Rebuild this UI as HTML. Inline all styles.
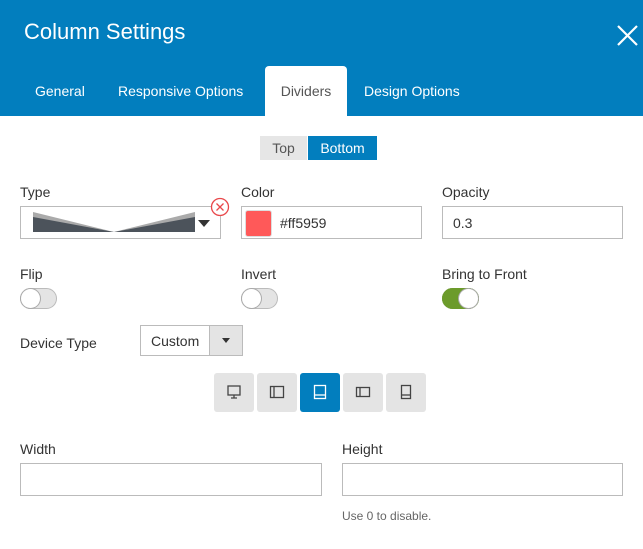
<!DOCTYPE html>
<html><head><meta charset="utf-8"><style>
*{box-sizing:border-box;margin:0;padding:0}
body{width:643px;height:549px;background:#fff;font-family:"Liberation Sans",sans-serif;color:#333;position:relative;overflow:hidden}
.abs{position:absolute}
.hdr{left:0;top:0;width:643px;height:116px;background:#027ebe}
.title{left:24px;top:19px;font-size:22px;color:#fff}
.tab{top:83px;font-size:14px;color:#fff}
.act{left:265px;top:66px;width:82px;height:50px;background:#fff;border-radius:4px 4px 0 0;color:#555;font-size:14px;text-align:center;padding-top:17px}
.lbl{font-size:14px;color:#333}
.inp{border:1px solid #bbb;background:#fff;height:33px}
.tog{width:37px;height:21px;border-radius:11px;border:1px solid #bbb;background:#e4e4e4}
.tog::after{content:"";position:absolute;left:0;top:0;width:19px;height:19px;border-radius:50%;background:#fff;box-shadow:0 0 0 1px #aaa}
.dev{top:373px;width:40px;height:39px;background:#e4e4e4;border-radius:3px}
.dev svg{position:absolute;left:12px;top:11px}
</style></head><body>
<div class="abs hdr"></div>
<div class="abs title">Column Settings</div>
<svg class="abs" style="left:617px;top:25px" width="21" height="21"><path d="M1 1L20 20M20 1L1 20" stroke="#fff" stroke-width="2.2"/></svg>
<div class="abs tab" style="left:35px">General</div>
<div class="abs tab" style="left:118px">Responsive Options</div>
<div class="abs act">Dividers</div>
<div class="abs tab" style="left:364px">Design Options</div>

<div class="abs" style="left:260px;top:136px;width:47px;height:24px;background:#e6e6e6;font-size:14px;color:#555;text-align:center;line-height:24px">Top</div>
<div class="abs" style="left:308px;top:136px;width:69px;height:24px;background:#027ebe;font-size:14px;color:#fff;text-align:center;line-height:24px">Bottom</div>

<div class="abs lbl" style="left:20px;top:184px">Type</div>
<div class="abs lbl" style="left:241px;top:184px">Color</div>
<div class="abs lbl" style="left:442px;top:184px">Opacity</div>

<div class="abs inp" style="left:20px;top:206px;width:201px"></div>
<svg class="abs" style="left:33px;top:212px" width="162" height="20"><polygon points="0,0 0,20 162,20 162,0 81,20" fill="#aaa"/><polygon points="0,5 0,20 162,20 162,5 81,20" fill="#4c535b"/></svg>
<svg class="abs" style="left:198px;top:220px" width="12" height="8"><polygon points="0,0 12,0 6,7" fill="#333"/></svg>
<svg class="abs" style="left:210px;top:197px" width="20" height="20"><circle cx="10" cy="10" r="8.5" fill="#fff" stroke="#e9484b" stroke-width="1.3"/><path d="M6.5 6.5L13.5 13.5M13.5 6.5L6.5 13.5" stroke="#e9484b" stroke-width="1.3"/></svg>

<div class="abs inp" style="left:241px;top:206px;width:181px"></div>
<div class="abs" style="left:245px;top:210px;width:27px;height:27px;background:#ff5959;border-radius:3px;border:1px solid #ddd"></div>
<div class="abs" style="left:280px;top:215px;font-size:14px">#ff5959</div>

<div class="abs inp" style="left:442px;top:206px;width:181px"></div>
<div class="abs" style="left:453px;top:215px;font-size:14px">0.3</div>

<div class="abs lbl" style="left:20px;top:266px">Flip</div>
<div class="abs lbl" style="left:241px;top:266px">Invert</div>
<div class="abs lbl" style="left:442px;top:266px">Bring to Front</div>
<div class="abs tog" style="left:20px;top:288px"></div>
<div class="abs tog" style="left:241px;top:288px"></div>
<div class="abs tog" style="left:442px;top:288px;background:#6c9b2b;border-color:#6c9b2b"></div>
<style>.on::after{left:16px!important}</style>
<div class="abs tog on" style="left:442px;top:288px;background:#6c9b2b;border-color:#6c9b2b"></div>

<div class="abs lbl" style="left:20px;top:335px">Device Type</div>
<div class="abs inp" style="left:140px;top:325px;width:103px;height:31px"></div>
<div class="abs" style="left:151px;top:333px;font-size:14px">Custom</div>
<div class="abs" style="left:209px;top:326px;width:33px;height:29px;background:#e4e4e4;border-left:1px solid #bbb"></div>
<svg class="abs" style="left:222px;top:338px" width="8" height="6"><polygon points="0,0 8,0 4,5" fill="#333"/></svg>

<div class="abs dev" style="left:214px"><svg width="16" height="16"><rect x="2" y="2" width="12" height="9" fill="none" stroke="#444" stroke-width="1.3"/><path d="M8 11V14M5 14H11" stroke="#444" stroke-width="1.3"/></svg></div>
<div class="abs dev" style="left:257px"><svg width="16" height="16"><rect x="1.5" y="2.5" width="13" height="11" fill="none" stroke="#444" stroke-width="1.3"/><path d="M5 3V13" stroke="#444" stroke-width="1.3"/></svg></div>
<div class="abs dev" style="left:300px;background:#027ebe"><svg width="16" height="16"><rect x="2.5" y="1.5" width="11" height="13" fill="none" stroke="#fff" stroke-width="1.3"/><path d="M3 11H13" stroke="#fff" stroke-width="1.3"/></svg></div>
<div class="abs dev" style="left:343px"><svg width="16" height="16"><rect x="1.5" y="3.5" width="13" height="9" fill="none" stroke="#444" stroke-width="1.3"/><path d="M5 4V12" stroke="#444" stroke-width="1.3"/></svg></div>
<div class="abs dev" style="left:386px"><svg width="16" height="16"><rect x="3.5" y="1.5" width="9" height="13" fill="none" stroke="#444" stroke-width="1.3"/><path d="M4 11H12" stroke="#444" stroke-width="1.3"/></svg></div>

<div class="abs lbl" style="left:20px;top:441px">Width</div>
<div class="abs lbl" style="left:342px;top:441px">Height</div>
<div class="abs inp" style="left:20px;top:463px;width:302px"></div>
<div class="abs inp" style="left:342px;top:463px;width:281px"></div>
<div class="abs" style="left:342px;top:509px;font-size:12px;color:#666">Use 0 to disable.</div>
</body></html>
